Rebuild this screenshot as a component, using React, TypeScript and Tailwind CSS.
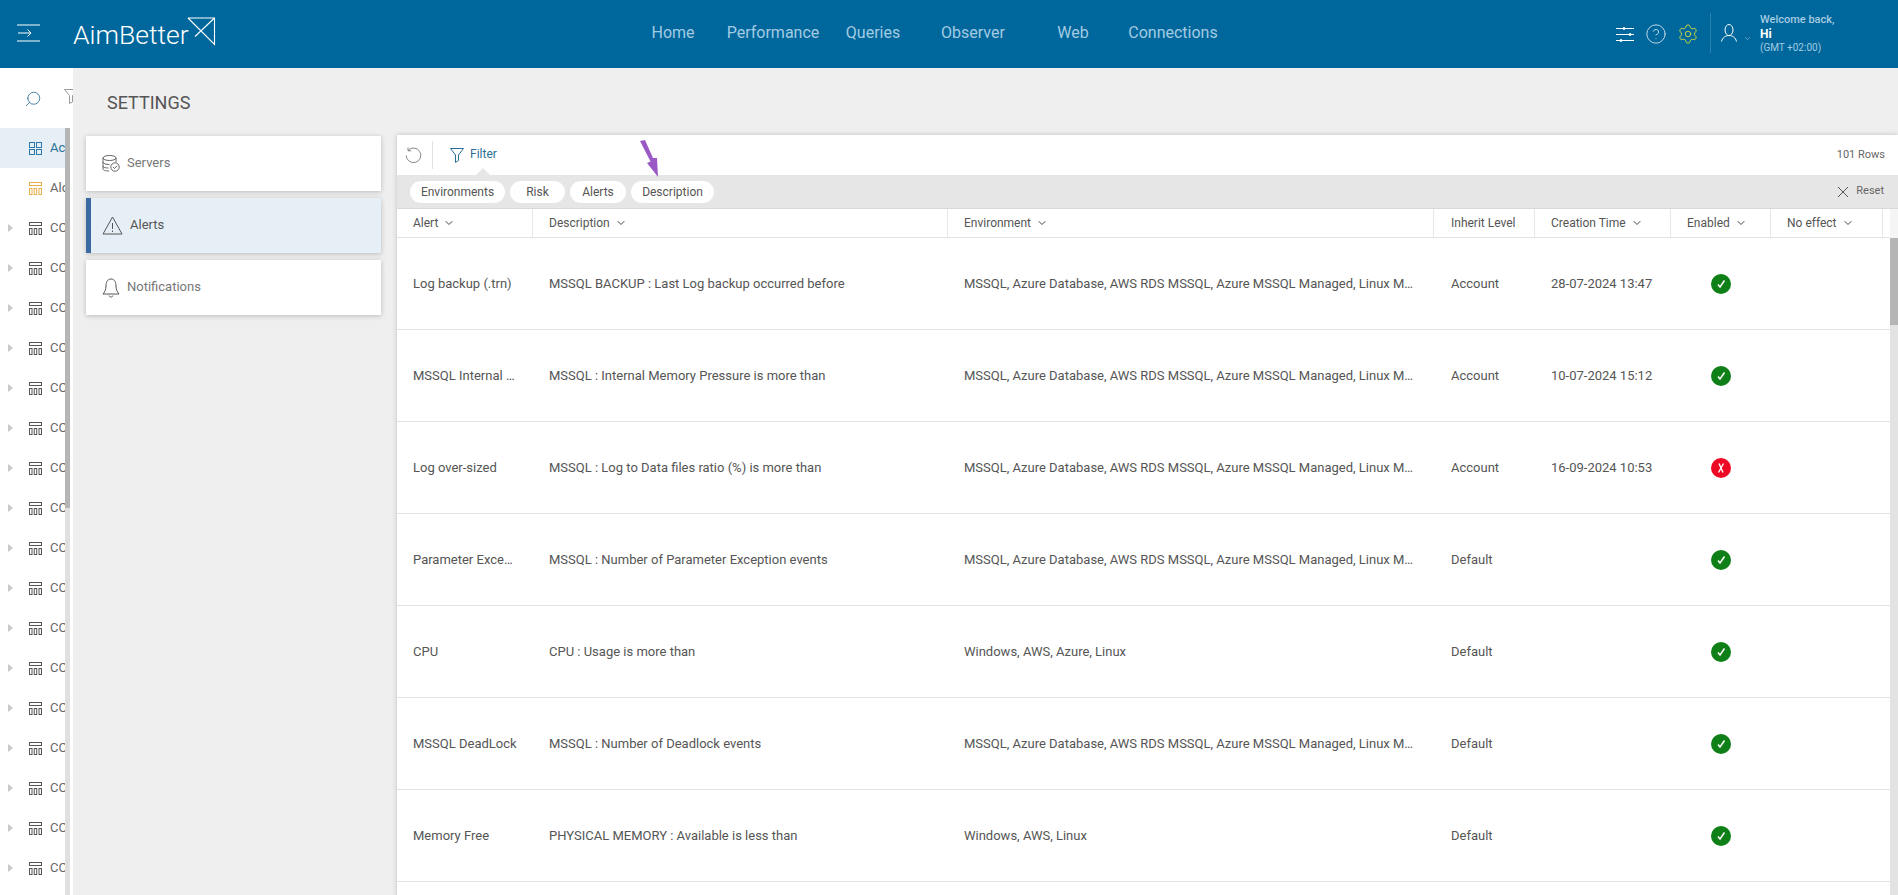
import React from 'react'
import { ChevronDown, CircleHelp, Search, Settings } from 'lucide-react'

const font = { fontFamily: 'Roboto, sans-serif' }

const navItems = ['Home', 'Performance', 'Queries', 'Observer', 'Web', 'Connections']

const envAll = 'MSSQL, Azure Database, AWS RDS MSSQL, Azure MSSQL Managed, Linux MSSQL'

const rows = [
  { alert: 'Log backup (.trn)', desc: 'MSSQL BACKUP : Last Log backup occurred before', env: envAll, level: 'Account', time: '28-07-2024 13:47', ok: true },
  { alert: 'MSSQL Internal Memory', desc: 'MSSQL : Internal Memory Pressure is more than', env: envAll, level: 'Account', time: '10-07-2024 15:12', ok: true },
  { alert: 'Log over-sized', desc: 'MSSQL : Log to Data files ratio (%) is more than', env: envAll, level: 'Account', time: '16-09-2024 10:53', ok: false },
  { alert: 'Parameter Exception', desc: 'MSSQL : Number of Parameter Exception events', env: envAll, level: 'Default', time: '', ok: true },
  { alert: 'CPU', desc: 'CPU : Usage is more than', env: 'Windows, AWS, Azure, Linux', level: 'Default', time: '', ok: true },
  { alert: 'MSSQL DeadLock', desc: 'MSSQL : Number of Deadlock events', env: envAll, level: 'Default', time: '', ok: true },
  { alert: 'Memory Free', desc: 'PHYSICAL MEMORY : Available is less than', env: 'Windows, AWS, Linux', level: 'Default', time: '', ok: true },
]

const columns = [
  { label: 'Alert', sort: true },
  { label: 'Description', sort: true },
  { label: 'Environment', sort: true },
  { label: 'Inherit Level', sort: false },
  { label: 'Creation Time', sort: true },
  { label: 'Enabled', sort: true },
  { label: 'No effect', sort: true },
]

const gridCols = 'grid grid-cols-[136px_415px_486px_101px_136px_100px_112px]'

function TableIcon({ color }: { color: string }) {
  return (
    <svg width="13" height="13" viewBox="0 0 13 13" fill="none" stroke={color} strokeWidth="1">
      <rect x="0.5" y="0.5" width="12" height="3" />
      <rect x="0.5" y="6.5" width="2.5" height="6" />
      <rect x="5.2" y="6.5" width="2.5" height="6" />
      <rect x="10" y="6.5" width="2.5" height="6" />
    </svg>
  )
}

function Logo() {
  return (
    <div className="flex items-center">
      <span className="mt-[2px] text-[26.5px] font-light leading-none text-white">AimBetter</span>
      <svg className="-ml-[2px] -mt-[5px]" width="29" height="29" viewBox="0 0 29 29" fill="none" stroke="#fff" strokeWidth="1.1">
        <path d="M1 1H27.5V27.5L1 1" />
        <path d="M27.5 1L8 19.5" />
      </svg>
    </div>
  )
}

function Header() {
  return (
    <header className="flex h-[68px] items-center bg-[#00679c]">
      <div className="flex w-[623px] items-center">
        <svg className="ml-[17px] mr-[33px] -mt-[2px]" width="23" height="18" viewBox="0 0 23 18" fill="none" stroke="#fff" strokeWidth="1">
          <path d="M0 1H23M0 17H23M1 9H14M10.5 5.5L14 9L10.5 12.5" />
        </svg>
        <Logo />
      </div>
      <nav className="-mt-[2px] flex">
        {navItems.map((n) => (
          <a key={n} className="w-[100px] text-center text-[16px] text-[#a3cbe2]">{n}</a>
        ))}
      </nav>
      <div className="ml-auto flex h-full items-center">
        <svg width="18" height="15" viewBox="0 0 18 15" fill="none" stroke="#fff" strokeWidth="1">
          <path d="M0 1.5H18M0 7.5H18M0 13.5H18" />
          <circle cx="8" cy="1.5" r="1" fill="#fff" />
          <circle cx="14" cy="7.5" r="1" fill="#fff" />
          <circle cx="5" cy="13.5" r="1" fill="#fff" />
        </svg>
        <CircleHelp className="ml-[11px] -mt-px text-white" size={22} strokeWidth={0.8} />
        <Settings className="ml-[10px] -mt-px text-[#d3dc3c]" size={22} strokeWidth={1} />
        <div className="ml-[11px] -mt-[2px] h-[40px] w-px bg-[#2a83b0]" />
        <svg className="ml-[10px] -mt-[2px]" width="16" height="18" viewBox="0 0 16 18" fill="none" stroke="#fff" strokeWidth="1">
          <ellipse cx="8" cy="6" rx="4" ry="5.5" />
          <path d="M0.5 17.5C1.5 13.5 4.5 11.5 8 11.5C11.5 11.5 14.5 13.5 15.5 17.5" />
        </svg>
        <ChevronDown className="ml-[6px] mt-[8px] text-[#a3cbe2]" size={9} strokeWidth={1.5} />
        <div className="ml-[8px] -mt-[2px] w-[138px] leading-none">
          <div className="text-[11px] font-medium text-[#a3cbe2]">Welcome back,</div>
          <div className="mt-[3px] text-[12px] font-bold text-white">Hi</div>
          <div className="mt-[3px] text-[10px] text-[#a3cbe2]">(GMT +02:00)</div>
        </div>
      </div>
    </header>
  )
}

function Sidebar() {
  const companies = Array.from({ length: 17 })
  return (
    <aside className="flex w-[73px] shrink-0 flex-col overflow-hidden bg-white">
      <div className="flex h-[60px] shrink-0 items-center gap-[22px] pl-[24px]">
        <Search className="mt-[1px] shrink-0 -scale-x-100 text-[#2a6f97]" size={18} strokeWidth={1.1} />
        <svg className="shrink-0 -mt-[4px]" width="14" height="15" viewBox="0 0 14 15" fill="none" stroke="#999" strokeWidth="1">
          <path d="M0.5 0.5H13.5L8.5 6.5V13L5.5 14.5V6.5Z" />
        </svg>
      </div>
      <div className="flex min-h-0 flex-1">
        <div className="w-[65px] overflow-hidden">
          <div className="flex h-[40px] items-center bg-[#e6eff5] pl-[29px] text-[13px] text-[#2a6f97]">
            <svg className="mr-[8px] shrink-0" width="13" height="13" viewBox="0 0 13 13" fill="none" stroke="#2a7bab" strokeWidth="1">
              <rect x="0.5" y="0.5" width="5" height="5" />
              <rect x="7.5" y="0.5" width="5" height="5" />
              <rect x="0.5" y="7.5" width="5" height="5" />
              <rect x="7.5" y="7.5" width="5" height="5" />
            </svg>
            Ac
          </div>
          <div className="flex h-[40px] items-center pl-[29px] text-[13px] text-[#666]">
            <span className="mr-[8px] shrink-0"><TableIcon color="#e8b04a" /></span>
            Alc
          </div>
          {companies.map((_, i) => (
            <div key={i} className="flex h-[40px] items-center text-[13px] text-[#666]">
              <span className="ml-[8px] mr-[16px] h-0 w-0 border-y-[4px] border-l-[5px] border-y-transparent border-l-[#c9c9c9]" />
              <span className="mr-[8px] shrink-0"><TableIcon color="#555" /></span>
              CO
            </div>
          ))}
        </div>
        <div className="w-[5px] bg-[#e0e0e0]">
          <div className="h-[380px] bg-[#b5b5b5]" />
        </div>
      </div>
    </aside>
  )
}

function NavCard({ icon, label, active }: { icon: React.ReactNode; label: string; active?: boolean }) {
  return (
    <div className={`flex h-[55px] items-center gap-[7px] shadow-[0_1px_5px_rgba(0,0,0,0.22)] ${active ? 'border-l-[5px] border-[#3a69a3] bg-[#e6eff5] pl-[11px] text-[#555]' : 'bg-white pl-[16px] text-[#777]'}`}>
      {icon}
      <span className="-mt-[2px] text-[13px]">{label}</span>
    </div>
  )
}

function SettingsNav() {
  return (
    <div className="flex w-[295px] shrink-0 flex-col gap-[7px] pt-px">
      <NavCard
        label="Servers"
        icon={
          <svg width="18" height="17" viewBox="0 0 18 17" fill="none" stroke="#555" strokeWidth="0.9">
            <ellipse cx="7.5" cy="3" rx="6.5" ry="2.5" />
            <path d="M1 3V14C1 15 3 16 7 16M14 3V7M1 7C1 8.5 4 9.5 7.5 9.5M1 11C1 12.5 3.5 13 6.5 13" />
            <circle cx="13" cy="12" r="4.2" fill="#fff" />
            <path d="M11 12L12.5 13.5L15 10.8" />
          </svg>
        }
      />
      <NavCard
        active
        label="Alerts"
        icon={
          <svg width="21" height="19" viewBox="0 0 21 19" fill="none" stroke="#555" strokeWidth="1">
            <path d="M10.5 1L20 18H1Z" />
            <path d="M10.5 7V13M10.5 14.5V16" />
          </svg>
        }
      />
      <NavCard
        label="Notifications"
        icon={
          <svg width="18" height="20" viewBox="0 0 18 20" fill="none" stroke="#555" strokeWidth="1">
            <path d="M9 1C5 1 4 5 4 8C4 12 2.5 14 1 16H17C15.5 14 14 12 14 8C14 5 13 1 9 1Z" />
            <path d="M7 17.5C7.5 19.5 10.5 19.5 11 17.5" />
          </svg>
        }
      />
    </div>
  )
}

function StatusIcon({ ok }: { ok: boolean }) {
  return ok ? (
    <span className="flex h-[20px] w-[20px] items-center justify-center rounded-full bg-[#0f7f17]">
      <svg width="10" height="10" viewBox="0 0 10 10" fill="none" stroke="#fff" strokeWidth="1.5">
        <path d="M2 5.5L4 8L8.5 1.5" />
      </svg>
    </span>
  ) : (
    <span className="flex h-[20px] w-[20px] items-center justify-center rounded-full bg-[#ee0a24]">
      <svg width="10" height="12" viewBox="0 0 10 12" fill="none" stroke="#fff" strokeWidth="1.4">
        <path d="M3 1.5L7 10.5M7.5 1.5L2.5 10.5" />
      </svg>
    </span>
  )
}

function Toolbar() {
  return (
    <div className="relative flex h-[40px] items-center bg-white">
      <svg className="ml-[8px]" width="17" height="17" viewBox="0 0 17 17" fill="none" stroke="#888" strokeWidth="1">
        <path d="M3 3.5A7.3 7.3 0 1 1 1.2 8.5" />
        <path d="M3 0.5V3.8H6.3" />
      </svg>
      <div className="ml-[10px] h-[28px] w-px bg-[#e2e2e2]" />
      <svg className="ml-[17px]" width="14" height="15" viewBox="0 0 14 15" fill="none" stroke="#2a6f97" strokeWidth="1">
        <path d="M0.5 0.5H13.5L8.5 7V12.5L5.5 14.5V7Z" />
      </svg>
      <span className="ml-[6px] -mt-[2px] text-[12px] text-[#2a6f97]">Filter</span>
      <span className="ml-auto mr-[13px] text-[11px] text-[#666]">101 Rows</span>
      <span className="absolute bottom-0 left-[79px] h-0 w-0 border-x-[7px] border-b-[7px] border-x-transparent border-b-[#e6e6e6]" />
    </div>
  )
}

function FilterBar() {
  const pills = [
    { label: 'Environments', w: 'w-[95px]' },
    { label: 'Risk', w: 'w-[55px]' },
    { label: 'Alerts', w: 'w-[56px]' },
    { label: 'Description', w: 'w-[83px]' },
  ]
  return (
    <div className="flex h-[34px] items-center gap-[5px] border-b border-[#d9d9d9] bg-[#e6e6e6] pl-[13px]">
      {pills.map((p) => (
        <span key={p.label} className={`flex h-[22px] ${p.w} items-center justify-center rounded-full bg-white text-[12px] text-[#555]`}>{p.label}</span>
      ))}
      <svg className="ml-auto" width="12" height="12" viewBox="0 0 12 12" fill="none" stroke="#555" strokeWidth="1">
        <path d="M1 1L11 11M11 1L1 11" />
      </svg>
      <span className="ml-[2px] mr-[14px] text-[11px] text-[#666]">Reset</span>
    </div>
  )
}

function AlertsTable() {
  return (
    <div className="flex">
      <div className="w-[1493px] shrink-0 bg-white">
        <div className={`${gridCols} h-[29px] border-b border-[#e3e3e3] text-[12px] text-[#555]`}>
          {columns.map((c, i) => (
            <div key={c.label} className={`flex items-center gap-[5px] border-r border-[#e8e8e8] ${i === 3 ? 'pl-[17px]' : 'pl-[16px]'}`}>
              {c.label}
              {c.sort && <ChevronDown className="text-[#444]" size={12} strokeWidth={2} />}
            </div>
          ))}
        </div>
        {rows.map((r) => (
          <div key={r.desc} className={`${gridCols} h-[92px] items-center border-b border-[#e3e3e3] text-[13px] text-[#555]`}>
            <div className="truncate pl-[16px] pr-[15px]">{r.alert}</div>
            <div className="truncate pl-[16px]">{r.desc}</div>
            <div className="truncate pl-[16px] pr-[20px]">{r.env}</div>
            <div className="pl-[17px]">{r.level}</div>
            <div className="pl-[16px]">{r.time}</div>
            <div className="pl-[40px]"><StatusIcon ok={r.ok} /></div>
            <div />
          </div>
        ))}
        <div className="h-[92px]" />
      </div>
      <div className="flex-1 bg-[#e3e3e3]">
        <div className="h-[29px] bg-[#f5f5f5]" />
        <div className="h-[87px] bg-[#b5b5b5]" />
      </div>
    </div>
  )
}

export default function App() {
  return (
    <div className="flex h-[895px] w-full flex-col overflow-hidden bg-[#efefef]" style={font}>
      <Header />
      <div className="flex min-h-0 flex-1">
        <Sidebar />
        <main className="min-w-0 flex-1 pl-[13px]">
          <h1 className="flex h-[67px] items-center pl-[21px] pt-px text-[18px] text-[#555]">SETTINGS</h1>
          <div className="flex gap-[16px]">
            <SettingsNav />
            <div className="relative min-w-0 flex-1 shadow-[0_0_5px_rgba(0,0,0,0.2)]">
              <Toolbar />
              <FilterBar />
              <AlertsTable />
              <svg className="absolute left-[243px] top-[5px]" width="19" height="38" viewBox="0 0 19 38" fill="#9b59c6">
                <path d="M0 1L5 0L13 18L17 18L18 37L7 23L10.5 21.5Z" />
              </svg>
            </div>
          </div>
        </main>
      </div>
    </div>
  )
}
